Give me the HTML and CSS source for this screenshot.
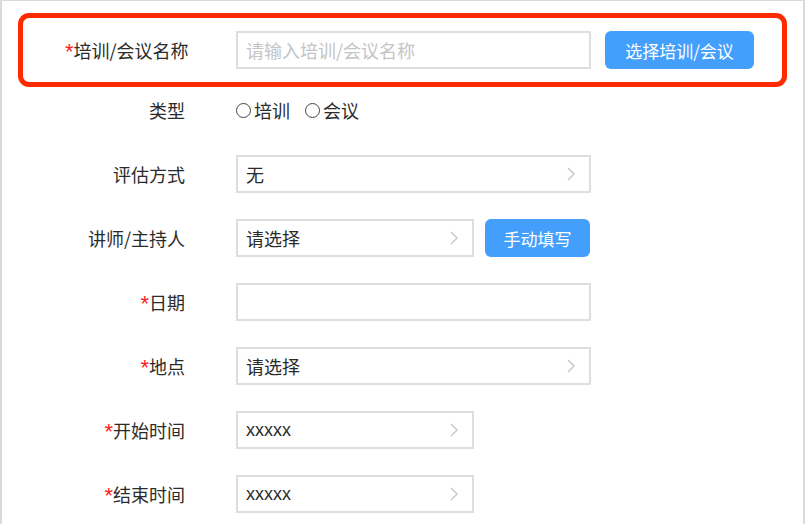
FILE: index.html
```html
<!DOCTYPE html>
<html lang="zh">
<head>
<meta charset="utf-8">
<link rel="stylesheet" href="styles.css">
</head>
<body>
<div class="frame">
  <div class="highlight">
    <div class="row row-hl">
      <label class="label"><span class="req">*</span>培训/会议名称</label>
      <div class="field wide placeholder">请输入培训/会议名称</div>
      <button class="btn btn-pick">选择培训/会议</button>
    </div>
  </div>
  <div class="form">
    <div class="row row-radio">
      <label class="label">类型</label>
      <div class="radios">
        <span class="radio"><span class="dot"></span>培训</span>
        <span class="radio"><span class="dot"></span>会议</span>
      </div>
    </div>
    <div class="row">
      <label class="label">评估方式</label>
      <div class="field wide"><span>无</span><svg class="chev" width="8" height="14" viewBox="0 0 8 14"><polyline points="1,1 7,7 1,13" fill="none" stroke="#c8c8c8" stroke-width="1.5"/></svg></div>
    </div>
    <div class="row">
      <label class="label">讲师/主持人</label>
      <div class="field narrow"><span>请选择</span><svg class="chev" width="8" height="14" viewBox="0 0 8 14"><polyline points="1,1 7,7 1,13" fill="none" stroke="#c8c8c8" stroke-width="1.5"/></svg></div>
      <button class="btn btn-manual">手动填写</button>
    </div>
    <div class="row">
      <label class="label"><span class="req">*</span>日期</label>
      <div class="field wide"></div>
    </div>
    <div class="row">
      <label class="label"><span class="req">*</span>地点</label>
      <div class="field wide"><span>请选择</span><svg class="chev" width="8" height="14" viewBox="0 0 8 14"><polyline points="1,1 7,7 1,13" fill="none" stroke="#c8c8c8" stroke-width="1.5"/></svg></div>
    </div>
    <div class="row">
      <label class="label"><span class="req">*</span>开始时间</label>
      <div class="field narrow"><span class="latin">xxxxx</span><svg class="chev" width="8" height="14" viewBox="0 0 8 14"><polyline points="1,1 7,7 1,13" fill="none" stroke="#c8c8c8" stroke-width="1.5"/></svg></div>
    </div>
    <div class="row">
      <label class="label"><span class="req">*</span>结束时间</label>
      <div class="field narrow"><span class="latin">xxxxx</span><svg class="chev" width="8" height="14" viewBox="0 0 8 14"><polyline points="1,1 7,7 1,13" fill="none" stroke="#c8c8c8" stroke-width="1.5"/></svg></div>
    </div>
  </div>
</div>
</body>
</html>
```
FILE: styles.css
```css
html, body {
  margin: 0;
  padding: 0;
  background: #fff;
}
body {
  font-family: "Noto Sans CJK SC", "Liberation Sans", sans-serif;
  font-size: 18px;
  color: #2b2b2b;
}
.frame {
  width: 801px;
  height: 519px;
  border-style: solid;
  border-color: #dadada;
  border-width: 1px 2px 4px 2px;
  background: #fff;
  padding-top: 12px;
  box-sizing: content-box;
}
.highlight {
  margin-left: 16px;
  width: 769px;
  height: 74px;
  box-sizing: border-box;
  border: 5px solid #ff2a00;
  border-radius: 11px;
  display: flex;
  align-items: center;
}
.form {
  display: flex;
  flex-direction: column;
  gap: 26px;
  margin-top: 4px;
}
.row {
  display: flex;
  align-items: center;
  height: 38px;
  padding-left: 63px;
}
.row-hl {
  padding-left: 42px;
  width: 100%;
}
.label {
  width: 120px;
  margin-right: 51px;
  text-align: right;
  white-space: nowrap;
  line-height: 38px;
}
.req {
  color: #ff1d1d;
  font-family: "Liberation Sans", sans-serif;
  font-size: 22px;
  line-height: 0;
  position: relative;
  top: 1px;
}
.field {
  height: 38px;
  box-sizing: border-box;
  border: 2px solid #dedede;
  display: flex;
  align-items: center;
  justify-content: space-between;
  padding: 0 14px 0 8px;
  color: #2b2b2b;
}
.wide {
  width: 355px;
}
.narrow {
  width: 238px;
}
.placeholder {
  color: #c4c4c4;
}
.latin {
  font-family: "Liberation Sans", sans-serif;
}
.chev {
  display: block;
}
.btn {
  border: none;
  border-radius: 6px;
  background: #439ffb;
  color: #fff;
  font-family: "Noto Sans CJK SC", "Liberation Sans", sans-serif;
  font-size: 17px;
  height: 38px;
  padding: 0;
}
.btn-pick {
  width: 149px;
  margin-left: 14px;
}
.btn-manual {
  width: 105px;
  margin-left: 11px;
}
.radios {
  display: flex;
  align-items: center;
  gap: 15px;
}
.radio {
  display: inline-flex;
  align-items: center;
}
.dot {
  width: 13px;
  height: 13px;
  border: 1px solid #444;
  border-radius: 50%;
  margin-right: 3px;
}
```
